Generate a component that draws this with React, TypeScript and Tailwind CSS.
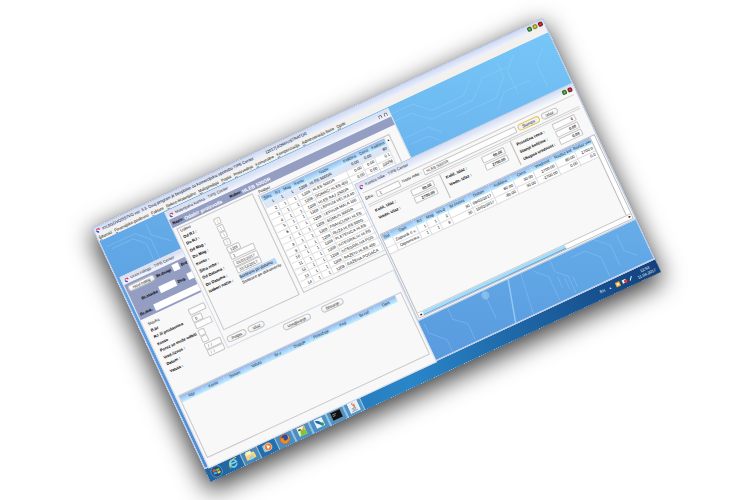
import type { ReactNode } from "react";

function AppIcon() {
  return (
    <svg viewBox="0 0 10 10" className="size-[5px] shrink-0">
      <circle cx="5" cy="5" r="4.5" fill="#f4f4ff" />
      <path d="M5 0.5A4.5 4.5 0 0 1 9.5 5L5 5Z" fill="#e04058" />
      <path d="M0.5 4A4.5 4.5 0 0 0 6 9.4L5 5Z" fill="#3b4fc4" />
      <path d="M1 3A4.5 4.5 0 0 1 5 0.5V4Z" fill="#d8405c" />
      <circle cx="5" cy="4.8" r="1.6" fill="#ffffff" />
    </svg>
  );
}

function TitleBar({ title, children }: { title: string; children?: ReactNode }) {
  return (
    <header className="flex h-[8px] shrink-0 items-center gap-[2px] bg-linear-to-b from-[#d3ddf5] to-[#f6f7fb] px-[2px] text-[#222]">
      <AppIcon />
      <h2 className="whitespace-nowrap">{title}</h2>
      {children}
    </header>
  );
}

function Lamp({ tone, label }: { tone: "green" | "yellow" | "red"; label: string }) {
  const tones = {
    green: "bg-radial from-[#7edb55] to-[#1d6a1c]",
    yellow: "bg-radial from-[#f5e02e] to-[#a88f10]",
    red: "bg-radial from-[#ee4a4a] to-[#84161c]",
  };
  return <button aria-label={label} className={`size-[5px] rounded-full border border-[#0004] ${tones[tone]}`} />;
}

function PillButton({ children, accent }: { children: ReactNode; accent?: boolean }) {
  return (
    <button
      className={`h-[7px] shrink-0 rounded-full border px-[4px] leading-[5px] font-normal text-[#111] ${
        accent ? "border-[#e6c94e] bg-[#eef0fb]" : "border-[#c4c4c4] bg-linear-to-b from-white to-[#ececec]"
      }`}
    >
      {children}
    </button>
  );
}

const fieldBase = "h-[7px] min-w-0 rounded-[1px] border border-[#c6c6c6] bg-[#fdfdfd] px-[2px] leading-[5px] text-[#222]";

function FormRow({ label, id, value, width }: { label: string; id: string; value: string; width: string }) {
  return (
    <div className="contents">
      <label htmlFor={id} className="font-bold whitespace-nowrap">
        {label}
      </label>
      <input id={id} defaultValue={value} className={`${fieldBase} ${width}`} />
    </div>
  );
}

const menuItems = [
  "Šifarnici",
  "Finansijsko-poslovno",
  "Fakture",
  "Robno-Materijalno",
  "Maloprodaja",
  "Popisi",
  "Proizvodnja",
  "Komunalne",
  "Kompenzacija",
  "Administracija Baze",
  "Opšti",
];

const headRow = "h-[7px] bg-linear-to-b from-[#93b6ec] to-[#c3efff] text-[#123]";

/* ---------- order entry window ---------- */

const orderFields = [
  { label: "B.br", value: "", width: "w-[18px]" },
  { label: "RJ ili prodavnica", value: "0", width: "w-[11px]" },
  { label: "Konto", value: "", width: "w-[18px]" },
  { label: "Porez se može odbiti", value: "", width: "w-[7px]" },
  { label: "Vred./iznos :", value: "", width: "w-[7px]" },
  { label: "Datum :", value: "/  /", width: "w-[18px]" },
  { label: "Valuta :", value: "/  /", width: "w-[18px]" },
];

const orderColumns = ["Rbr", "Konto", "Datum", "Valuta", "Br.v", "Duguje", "Potražuje", "Kod", "Br.rač", "Opis"];

function OrderWindow() {
  return (
    <section className="absolute top-[55px] left-[3px] flex h-[211px] w-[252px] flex-col border border-[#d5dbe6] bg-[#f8f8f8]">
      <TitleBar title="Unos naloga - TIPB Center" />
      <div className="flex h-[39px] shrink-0 flex-col justify-between bg-[#949dc2] px-[2px] py-[2px] font-bold">
        <div className="flex items-center gap-[2px]">
          <PillButton>Novi nalog</PillButton>
          <label htmlFor="o-nr">Br.dnagi</label>
          <input id="o-nr" className="h-[7px] w-[7px] bg-white" />
          <span>Brdo.</span>
        </div>
        <div className="flex items-center gap-[2px] pl-[8px]">
          <label htmlFor="o-item">Br.stavke</label>
          <input id="o-item" className="h-[7px] w-[18px] bg-white" />
          <label htmlFor="o-debit">Dug.</label>
          <input id="o-debit" className="h-[7px] w-[14px] bg-white" />
        </div>
        <div className="flex items-center gap-[2px]">
          <label htmlFor="o-doc">Br.dok.</label>
          <input id="o-doc" className="h-[7px] w-[120px] bg-white" />
        </div>
      </div>
      <div className="shrink-0 px-[5px] pt-[4px]">
        <p className="leading-[6px]">Stavka</p>
        <div className="grid h-[52px] grid-cols-[42px_1fr] content-between items-center">
          {orderFields.map((f, i) => (
            <FormRow key={f.label} id={`order-${i}`} {...f} />
          ))}
        </div>
      </div>
      <div className="flex justify-center gap-[12px] pt-[2px] pl-[68px]">
        <PillButton>Uredjivanje</PillButton>
        <PillButton>Brisanje</PillButton>
      </div>
      <div className="mx-[2px] mt-auto mb-[9px] h-[69px] border border-[#c9c9c9] pr-[6px]">
        <table className="w-full table-fixed border-collapse">
          <thead>
            <tr className={headRow}>
              {orderColumns.map((c) => (
                <th key={c} className="p-0 font-normal">{c}</th>
              ))}
            </tr>
          </thead>
        </table>
      </div>
    </section>
  );
}

/* ---------- product selection window ---------- */

const filterFields = [
  { label: "Od RJ :", value: "1", width: "w-[7px]" },
  { label: "Do RJ :", value: "1", width: "w-[7px]" },
  { label: "Od Mag :", value: "1", width: "w-[7px]" },
  { label: "Do Mag :", value: "1", width: "w-[7px]" },
  { label: "Konto :", value: "1208", width: "w-[14px]" },
  { label: "Šifra robe :", value: "1", width: "w-[27px]" },
  { label: "Od Datuma :", value: "01/01/2017", width: "w-[27px]" },
  { label: "Do Datuma :", value: "31/12/2017", width: "w-[27px]" },
];

const products = [
  ["HLEB 500GR", "60"],
  ["HLEB 500GR", "0.1"],
  ["DOMAĆI HLEB 400", "22056"],
  ["HLEB RAJ 250GR", "6705"],
  ["LEPINJA VELIKA 40", "0"],
  ["LEPINJA MALA 100", "0"],
  ["SOMUN 300GR", "0"],
  ["FRANCUSKI HLEB", "0"],
  ["RUŽA HLEB 500G", "0"],
  ["PLETENICA HLEB", "0"],
  ["INTEGRALNI HLEB", "0"],
  ["INTEGRALNA POG", "0"],
  ["RAŽENI HLEB 400", "0"],
  ["RAŽENA POGAČA", "0"],
];

function ProductWindow() {
  return (
    <section className="absolute top-[15px] left-[71px] flex h-[150px] w-[247px] flex-col border border-[#d5dbe6] bg-[#f8f8f8]">
      <TitleBar title="Materijalna kartica - TIPB Center">
        <span className="ml-auto flex gap-[2px]">
          <button aria-label="Smanji" className="size-[4px] rounded-t-full border border-b-0 border-[#777]" />
          <button aria-label="Zatvori" className="size-[4px] rounded-t-full border border-b-0 border-[#777]" />
        </span>
      </TitleBar>
      <div className="flex h-[9px] shrink-0 items-center gap-[1px] bg-[#949dc2] px-[2px] font-bold">
        <span>Naziv:</span>
        <strong className="text-[5px] text-white">Odabir proizvoda</strong>
        <span className="ml-[8px]">Robni:</span>
        <strong className="text-[5px] text-white">HLEB 500GR</strong>
      </div>
      <div className="flex h-[114px] shrink-0 gap-[4px] pt-[2px] pr-[9px] pl-[3px]">
        <div className="w-[84px] shrink-0 border border-[#c6c6c6] px-[2px]">
          <p className="leading-[6px]">Uslovi</p>
          <div className="grid h-[73px] grid-cols-[34px_1fr] content-between items-center leading-[6px]">
            {filterFields.map((f, i) => (
              <FormRow key={f.label} id={`filter-${i}`} {...f} />
            ))}
            <span id="sort-label" className="self-start font-bold whitespace-nowrap">Izaberi način :</span>
            <ul role="listbox" aria-labelledby="sort-label" className="whitespace-nowrap">
              <li role="option" aria-selected="true" className="w-[40px] bg-[#b9d5f5]">Sortirano po datumu</li>
              <li role="option" aria-selected="false">Sortirano po dokumentu</li>
            </ul>
          </div>
        </div>
        <div className="flex min-w-0 grow flex-col">
          <p className="pl-[2px] leading-[4px]">Podaci</p>
          <div className="flex grow border border-[#c6c6c6] pt-[1px] pl-[1px]">
            <table className="h-[102px] grow table-fixed border-collapse bg-white text-right">
              <colgroup>
                <col className="w-[12px]" />
                <col className="w-[10px]" />
                <col className="w-[11px]" />
                <col className="w-[15px]" />
                <col className="w-[38px]" />
                <col className="w-[17px]" />
                <col className="w-[14px]" />
                <col className="w-[17px]" />
              </colgroup>
              <thead>
                <tr className={headRow}>
                  {["Šifra", "RJ", "Mag", "Konto", "Naziv", "Količina", "Cena", "Količina"].map((c, i) => (
                    <th key={i} className="p-0 text-center leading-[6px] font-normal">{c}</th>
                  ))}
                </tr>
              </thead>
              <tbody>
                {products.map(([name, qty], i) => (
                  <tr key={name + i} className={i === 0 ? "bg-[#dbe6fa]" : ""}>
                    {[String(i + 1), "1", "1", "1208", name, "0.00", "0.00", qty].map((v, j) => (
                      <td
                        key={j}
                        className={`overflow-hidden border-r border-b border-[#dedede] p-0 pr-[1px] leading-[5px] whitespace-nowrap ${j === 4 ? "pl-[1px] text-left" : ""}`}
                      >
                        {v}
                      </td>
                    ))}
                  </tr>
                ))}
              </tbody>
            </table>
            <div className="flex w-[5px] shrink-0 flex-col justify-between text-center text-[3px] leading-[6px]">
              <span>▲</span>
              <span>▼</span>
            </div>
          </div>
        </div>
      </div>
      <div className="flex grow items-center gap-[2px] pt-[4px] pl-[2px]">
        <PillButton>Potpis</PillButton>
        <PillButton>Izlaz</PillButton>
      </div>
    </section>
  );
}

/* ---------- stock card window ---------- */

const cardColumns = ["Dat", "Opis", "RJ", "Mag", "Vrs.d", "Br.otvora", "Datum", "Količina", "Cena", "Vrednost", "Razlaz kol", "Razlaz vred"];
const cardRows = [
  ["", "Zapisnik o v.", "1", "1", "2", "30", "09/02/2017", "60.00", "30.00", "2700.00", "60.00", "2700.0"],
  ["", "Otpremnica", "1", "1", "8", "30", "10/02/2017", "-60.00", "30.00", "-2700.00", "0.00", "0.0"],
];

function Totals({ rows, id }: { rows: string[][]; id: string }) {
  return (
    <div className="grid grow basis-0 grid-cols-[1fr_25px] content-start items-center gap-y-[1px] border-l border-[#bbb] pt-[2px] pr-[8px] pl-[4px] font-bold first:border-l-0">
      {rows.map(([label, value], i) => (
        <div key={label} className="contents">
          <label htmlFor={id + i} className="whitespace-nowrap">{label}</label>
          <input id={id + i} readOnly defaultValue={value} className={`${fieldBase} w-full bg-[#f1f1f1] text-right`} />
        </div>
      ))}
    </div>
  );
}

function CardWindow() {
  return (
    <section className="absolute top-[70px] left-[255px] flex h-[151px] w-[241px] flex-col border border-[#b9c6dd] bg-[#f8f8f8]">
      <TitleBar title="Kartica robe - TIPB Center">
        <span className="ml-auto flex gap-[1px]">
          <Lamp tone="green" label="Smanji" />
          <Lamp tone="red" label="Zatvori" />
        </span>
      </TitleBar>
      <div className="mx-[3px] mt-[2px] flex h-[14px] shrink-0 items-center gap-[2px] border-t border-b border-[#cfcfcf]">
        <label htmlFor="code" className="whitespace-nowrap">Šifra :</label>
        <input id="code" defaultValue="1" className={`${fieldBase} w-[26px]`} />
        <label htmlFor="name" className="whitespace-nowrap">Naziv robe :</label>
        <input id="name" defaultValue="HLEB 500GR" className={`${fieldBase} w-[102px]`} />
        <PillButton accent>Štampa</PillButton>
        <PillButton>Izlaz</PillButton>
      </div>
      <div className="mx-[3px] mt-[1px] flex h-[27px] shrink-0 border-t border-[#d8d8d8]">
        <Totals id="in" rows={[["Količ. Ulaz :", "60.00"], ["Vredn. Ulaz :", "2700.00"]]} />
        <Totals id="out" rows={[["Količ. Izlaz :", "60.00"], ["Vredn. Izlaz :", "2700.00"]]} />
        <Totals id="sum" rows={[["Prosečna cena :", "0"], ["Stanje količine :", "0.00"], ["Ukupna vrednost :", "0.00"]]} />
      </div>
      <div className="mx-[1px] mt-[3px] mb-[1px] flex grow flex-col border border-[#bdbdbd]">
        <div className="flex grow">
          <div className="min-w-0 grow">
            <table className="w-full table-fixed border-collapse text-right">
              <colgroup>
                <col className="w-[9px]" />
                <col className="w-[26px]" />
                <col className="w-[11px]" />
                <col className="w-[12px]" />
                <col className="w-[12px]" />
                <col className="w-[24px]" />
                <col className="w-[24px]" />
                <col className="w-[24px]" />
                <col className="w-[22px]" />
                <col className="w-[24px]" />
                <col className="w-[22px]" />
                <col className="w-[20px]" />
              </colgroup>
              <thead>
                <tr className={headRow}>
                  {cardColumns.map((c) => (
                    <th key={c} className="overflow-hidden p-0 text-center font-normal whitespace-nowrap">{c}</th>
                  ))}
                </tr>
              </thead>
              <tbody>
                {cardRows.map((row) => (
                  <tr key={row[1]} className="h-[7px] bg-white">
                    {row.map((v, j) => (
                      <td key={j} className="overflow-hidden border-r border-b border-[#dedede] p-0 pr-[1px] leading-[5px] whitespace-nowrap">{v}</td>
                    ))}
                  </tr>
                ))}
              </tbody>
            </table>
          </div>
          <div className="w-[5px] shrink-0 border-l border-[#bdbdbd] bg-white" />
        </div>
        <div className="flex h-[5px] shrink-0 items-center border-t border-[#c9c9c9] bg-white text-[3px]">
          <span className="w-[5px] text-center">◀</span>
          <div className="h-full w-2/3 border-b border-[#6fa0dc] bg-[#a5dcf6]" />
          <span className="ml-auto w-[5px] text-center">▶</span>
        </div>
      </div>
    </section>
  );
}

/* ---------- desktop ---------- */

function Wallpaper() {
  return (
    <svg viewBox="0 0 500 252" preserveAspectRatio="none" className="absolute inset-0 size-full" fill="none" stroke="#a9d8fb" strokeOpacity="0.3">
      <defs>
        <linearGradient id="sky" x1="0" y1="1" x2="1" y2="0">
          <stop offset="0" stopColor="#4f8cd6" />
          <stop offset="0.5" stopColor="#62a8e6" />
          <stop offset="1" stopColor="#76c6f8" />
        </linearGradient>
      </defs>
      <rect width="500" height="252" fill="url(#sky)" stroke="none" />
      <path d="M4 8H36L48 20V44M8 12H32L42 22V44M50 4V16L66 30" />
      <path d="M320 8H345L360 22H395L408 10M320 16H340L356 30H402L420 14H446M322 36H350L360 46M326 44H346L354 52M420 50L434 36H462M440 6V22L424 38H380M446 44V18L458 6M476 50V24L488 12" />
      <path d="M262 214V224L276 238V252M290 210V222L302 232V250M366 252L372 206M330 240V206M384 212L396 224V250M404 208V222L414 232V250M424 216H440L452 228V250M436 208H452L466 222V244M476 214V232L486 242M404 240V228M410 244V232M418 246V234" />
      <path d="M346 252L358 208" strokeWidth="1.5" strokeOpacity="0.7" />
      <circle cx="330" cy="214" r="4" fill="#b8dffb" fillOpacity="0.4" stroke="none" />
    </svg>
  );
}

function TaskButton({ label, open, children }: { label: string; open?: boolean; children: ReactNode }) {
  return (
    <button
      aria-label={label}
      className={`flex h-full w-[19px] items-center justify-center ${open ? "border-x border-[#c4e2f6aa] bg-[#ffffff30]" : ""}`}
    >
      <svg viewBox="0 0 20 20" className="size-[11px]">
        {children}
      </svg>
    </button>
  );
}

function Taskbar() {
  return (
    <footer className="flex h-[14px] shrink-0 items-center bg-linear-to-r from-[#21659f] via-[#2a86c8] via-45% to-[#12407c] pl-[1px] text-white">
      <button aria-label="Start" className="flex w-[18px] justify-center">
        <svg viewBox="0 0 20 20" className="size-[12px]">
          <circle cx="10" cy="10" r="9.5" fill="#1c4f86" stroke="#7fb8e0" />
          <path d="M4 6Q7 4 9.5 6V9.5Q7 8 4 9.5Z" fill="#f0592b" />
          <path d="M10.500 6Q13 7.500 16 6V9.500Q13 11 10.500 9.500Z" fill="#8ac541" />
          <path d="M4 10.500Q7 9 9.500 10.500V14Q7 12.500 4 14Z" fill="#3fa9e8" />
          <path d="M10.500 10.500Q13 12 16 10.500V14Q13 15.500 10.500 14Z" fill="#fbd130" />
        </svg>
      </button>
      <TaskButton label="Internet Explorer">
        <path d="M16 13A6.500 6.500 0 1 1 16.500 10H5" fill="none" stroke="#6fd0fa" strokeWidth="3" />
        <path d="M2 17Q0 12 8 6T19 3" fill="none" stroke="#f3d44a" strokeWidth="1.500" />
      </TaskButton>
      <TaskButton label="Explorer" open>
        <path d="M1 4H8L10 6H18V17H1Z" fill="#f6dd84" />
        <path d="M3 2H13V8H3Z" fill="#fff3c0" />
        <path d="M1 9H19V17H1Z" fill="#f3d67a" />
        <path d="M6 12H14V18H6Z" fill="#9fd0ef" />
      </TaskButton>
      <TaskButton label="Media Player">
        <rect x="1" y="4" width="12" height="13" rx="2" fill="#8ccaf0" />
        <circle cx="11" cy="10" r="7" fill="#f08032" stroke="#e8eef4" />
        <path d="M9 6L15 10L9 14Z" fill="#fff" />
      </TaskButton>
      <TaskButton label="Firefox" open>
        <circle cx="10" cy="10" r="9" fill="#e8641b" />
        <circle cx="11" cy="8.500" r="6" fill="#2b4fa0" />
        <path d="M2 8Q6 5 9 8Q6 10 9 13Q13 14 16 11Q15 18 9 18Q2 16 2 8Z" fill="#f58a1f" />
        <path d="M17 5Q20 12 15 17Q18 11 17 5Z" fill="#ffd040" />
      </TaskButton>
      <TaskButton label="Notepad++" open>
        <rect x="2" y="2" width="15" height="16" fill="#eef7e0" />
        <path d="M4 18L8 7L17 10V18Z" fill="#7fc53a" />
        <path d="M11 8L17 2L19 4L13 12Z" fill="#e0a73a" />
        <path d="M4 5H9V8H4Z" fill="#5a5a44" />
      </TaskButton>
      <TaskButton label="HeidiSQL" open>
        <rect x="2" y="2" width="16" height="16" fill="#eaf4fc" />
        <path d="M4 3L10 6L15 13L16 18L9 12L5 8Z" fill="#1a69b4" />
        <circle cx="14" cy="14" r="3" fill="#2a9a58" />
      </TaskButton>
      <TaskButton label="Command Prompt" open>
        <rect x="0" y="2" width="20" height="16" fill="#111" stroke="#999" />
        <path d="M3 7H10M3 10H8" stroke="#ddd" />
      </TaskButton>
      <TaskButton label="Java" open>
        <rect width="20" height="20" fill="#eaf0f5" />
        <path d="M10 2Q7 5 10 7T10 11M13 5Q10 7 13 9" fill="none" stroke="#e2632d" strokeWidth="1.500" />
        <path d="M5 12H14M6 14.500H13M4 17H15" stroke="#6b8096" strokeWidth="1.200" />
      </TaskButton>
      <div className="ml-auto flex items-center gap-[4px] pr-[4px]">
        <span>EN</span>
        <span className="text-[3px]">▲</span>
        <svg viewBox="0 0 32 10" className="h-[6px] w-[20px]">
          <rect x="0" y="1" width="8" height="8" fill="#f5a623" />
          <rect x="2" y="3" width="4" height="4" fill="#fff" />
          <path d="M12 2H19V8H12Z" fill="#f2f2f2" />
          <circle cx="18" cy="6" r="3" fill="#d93838" />
          <path d="M25 8L30 2" stroke="#fff" strokeWidth="1.500" />
        </svg>
        <time className="text-center leading-[5px]">
          12:53
          <br />
          11.04.2017
        </time>
      </div>
    </footer>
  );
}

export default function App() {
  return (
    <main className="flex min-h-screen items-center justify-center overflow-hidden bg-white pl-1 font-['Liberation_Sans',Arial,sans-serif] text-[4px] leading-[6px] text-black">
      <div className="flex aspect-video w-2/3 -rotate-25 flex-col shadow-[0_0_1px_#5f86b4,-3px_7px_24px_2px_rgba(0,0,0,0.75)]">
        <div className="relative flex grow flex-col border border-[#b4c4ea] bg-[#f3f1ee]">
          <header className="flex h-[7px] shrink-0 items-center gap-[2px] bg-linear-to-b from-[#cfdaf5] to-[#eef2fb] px-[1px]">
            <AppIcon />
            <h1 className="whitespace-nowrap">KNJIGOVODSTVO ver. 3.3. Ovaj program je besplatan za komercijalnu upotrebu TIPB Center</h1>
            <span className="ml-[12px]">[2017] ADMINISTRATOR</span>
            <span className="ml-auto flex gap-[1px]">
              <Lamp tone="green" label="Smanji" />
              <Lamp tone="yellow" label="Uvećaj" />
              <Lamp tone="red" label="Zatvori" />
            </span>
          </header>
          <nav className="flex h-[7px] shrink-0 items-center gap-[3px] pl-[1px] whitespace-nowrap">
            {menuItems.map((m) => (
              <button key={m}>
                <span className="underline decoration-[#888]">{m[0]}</span>
                {m.slice(1)}
              </button>
            ))}
          </nav>
          <div className="relative grow">
            <Wallpaper />
          </div>
          <OrderWindow />
          <ProductWindow />
          <CardWindow />
        </div>
        <Taskbar />
      </div>
    </main>
  );
}
